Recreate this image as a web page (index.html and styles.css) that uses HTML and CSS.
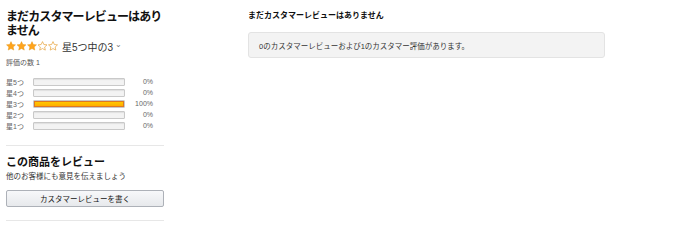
FILE: index.html
```html
<!DOCTYPE html>
<html lang="ja">
<head>
<meta charset="utf-8">
<link rel="stylesheet" href="styles.css">
</head>
<body>
<div class="page">
  <aside class="left">
    <h2 class="title">まだカスタマーレビューはありません</h2>
    <div class="rating">
      <span class="stars">
        <svg width="52" height="11" viewBox="0 0 52 11">
          <path d="M5 0.6l1.35 2.9 3.15.35-2.35 2.15.65 3.1L5 7.55 2.2 9.1l.65-3.1L.5 3.85l3.15-.35z" fill="#ffa41c" stroke="#e08a00" stroke-width=".4"/>
          <path transform="translate(10.5 0)" d="M5 0.6l1.35 2.9 3.15.35-2.35 2.15.65 3.1L5 7.55 2.2 9.1l.65-3.1L.5 3.85l3.15-.35z" fill="#ffa41c" stroke="#e08a00" stroke-width=".4"/>
          <path transform="translate(21 0)" d="M5 0.6l1.35 2.9 3.15.35-2.35 2.15.65 3.1L5 7.55 2.2 9.1l.65-3.1L.5 3.85l3.15-.35z" fill="#ffa41c" stroke="#e08a00" stroke-width=".4"/>
          <path transform="translate(31.5 0)" d="M5 0.6l1.35 2.9 3.15.35-2.35 2.15.65 3.1L5 7.55 2.2 9.1l.65-3.1L.5 3.85l3.15-.35z" fill="none" stroke="#e6a23a" stroke-width=".7"/>
          <path transform="translate(42 0)" d="M5 0.6l1.35 2.9 3.15.35-2.35 2.15.65 3.1L5 7.55 2.2 9.1l.65-3.1L.5 3.85l3.15-.35z" fill="none" stroke="#e6a23a" stroke-width=".7"/>
        </svg>
      </span>
      <span class="rating-text">星5つ中の3</span>
      <span class="caret">⌄</span>
    </div>
    <div class="count">評価の数 1</div>
    <table class="hist">
      <tr><td class="lab">星5つ</td><td class="barcell"><div class="bar"><div class="fill" style="width:0%"></div></div></td><td class="pct">0%</td></tr>
      <tr><td class="lab">星4つ</td><td class="barcell"><div class="bar"><div class="fill" style="width:0%"></div></div></td><td class="pct">0%</td></tr>
      <tr><td class="lab">星3つ</td><td class="barcell"><div class="bar"><div class="fill" style="width:100%"></div></div></td><td class="pct">100%</td></tr>
      <tr><td class="lab">星2つ</td><td class="barcell"><div class="bar"><div class="fill" style="width:0%"></div></div></td><td class="pct">0%</td></tr>
      <tr><td class="lab">星1つ</td><td class="barcell"><div class="bar"><div class="fill" style="width:0%"></div></div></td><td class="pct">0%</td></tr>
    </table>
    <hr class="divider first">
    <h3 class="sub">この商品をレビュー</h3>
    <p class="hint">他のお客様にも意見を伝えましょう</p>
    <button class="btn">カスタマーレビューを書く</button>
    <hr class="divider">
  </aside>
  <main class="right">
    <h4 class="rhead">まだカスタマーレビューはありません</h4>
    <div class="box">0のカスタマーレビューおよび1のカスタマー評価があります。</div>
  </main>
</div>
</body>
</html>
```
FILE: styles.css
```css
html, body { margin: 0; padding: 0; background: #fff; }
body {
  font-family: "Liberation Sans", "Noto Sans CJK JP", sans-serif;
  color: #111;
  font-size: 8px;
}
.page {
  display: flex;
  padding: 0 6px;
  gap: 84px;
}
.left { width: 158px; flex: none; }
.right { width: 357px; flex: none; }
.title {
  margin: 10px 0 0;
  font-size: 12px;
  letter-spacing: -0.9px;
  line-height: 14px;
  font-weight: 700;
}
.rating {
  display: flex;
  align-items: center;
  margin-top: 1px;
  height: 14px;
}
.stars { display: flex; width: 56px; }
.stars svg { display: block; }
.rating-text { font-size: 10px; color: #333; }
.caret { font-size: 8px; color: #777; margin-left: 2px; position: relative; top: -2px; }
.count { margin-top: 5px; font-size: 7px; color: #555; line-height: 10px; }
.hist {
  border-collapse: collapse;
  margin-top: 8px;
}
.hist td { padding: 0; height: 11px; font-size: 7px; color: #666; vertical-align: middle; }
.lab { width: 27px; }
.barcell { width: 92px; }
.bar {
  height: 8px;
  border: 1px solid #c9c9c9;
  border-radius: 1px;
  background: #f3f3f3;
  box-shadow: inset 0 1px 1px rgba(0,0,0,.08);
  box-sizing: border-box;
}
.fill {
  height: 100%;
  background: linear-gradient(#ffce00, #ffa700);
  box-shadow: inset 0 0 0 1px #de7921;
}
.pct { width: 28px; text-align: right; }
.divider {
  border: 0;
  border-top: 1px solid #e7e7e7;
  margin: 13px 0 0;
}
.divider.first { margin-top: 14px; }
.sub {
  margin: 9px 0 0;
  font-size: 11px;
  line-height: 14px;
  font-weight: 700;
}
.hint { margin: 3px 0 0; font-size: 7.5px; color: #333; line-height: 10px; }
.btn {
  display: block;
  width: 158px;
  height: 17px;
  margin-top: 8px;
  border: 1px solid #adb1b8;
  border-radius: 2px;
  background: linear-gradient(#f7f8fa, #e7e9ec);
  font-family: inherit;
  font-size: 7.5px;
  color: #111;
  padding: 0;
}
.rhead {
  margin: 11px 0 0;
  font-size: 8px;
  line-height: 10px;
  font-weight: 700;
}
.box {
  margin-top: 11px;
  height: 26px;
  box-sizing: border-box;
  border: 1px solid #e3e3e3;
  border-radius: 3px;
  background: #f3f3f3;
  padding: 0 10px;
  display: flex;
  align-items: center;
  font-size: 7.5px;
  color: #333;
}
```
